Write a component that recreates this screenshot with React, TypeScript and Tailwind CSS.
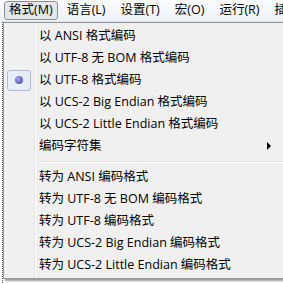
import { ReactNode } from 'react'

const font = { fontFamily: '"Open Sans", "Noto Sans CJK SC", sans-serif' }

const topMenus = ['语言(L)', '设置(T)', '宏(O)', '运行(R)', '插件(P)']

const group1 = [
  '以 ANSI 格式编码',
  '以 UTF-8 无 BOM 格式编码',
  '以 UTF-8 格式编码',
  '以 UCS-2 Big Endian 格式编码',
  '以 UCS-2 Little Endian 格式编码',
]

const group2 = [
  '转为 ANSI 编码格式',
  '转为 UTF-8 无 BOM 编码格式',
  '转为 UTF-8 编码格式',
  '转为 UCS-2 Big Endian 编码格式',
  '转为 UCS-2 Little Endian 编码格式',
]

function Item({ children, checked, submenu }: { children: ReactNode; checked?: boolean; submenu?: boolean }) {
  return (
    <div className="h-[22px] flex items-center relative">
      <div className="w-[30px] h-full flex items-center justify-center shrink-0">
        {checked && (
          <div className="w-[24px] h-[21px] rounded-[3px] border border-[#aebbd3] bg-[#e8eef8] flex items-center justify-center">
            <div className="w-[8px] h-[8px] rounded-full bg-[radial-gradient(circle_at_35%_35%,#a4a8ee,#3a3c9a)]" />
          </div>
        )}
      </div>
      <div className="pl-[5px] text-[12.5px] text-black whitespace-nowrap">{children}</div>
      {submenu && (
        <div className="absolute left-[263px] top-[7px] w-0 h-0 border-y-[4px] border-y-transparent border-l-[4px] border-l-black" />
      )}
    </div>
  )
}

export default function App() {
  return (
    <div className="w-[283px] h-[283px] bg-white relative overflow-hidden" style={font}>
      <div className="h-[22px] flex items-center bg-gradient-to-b from-[#fbfcfe] to-[#eef2f8] border-b border-[#dfe4ec] text-[12.5px] text-black whitespace-nowrap">
        <div className="shrink-0 ml-[4px] h-[19px] px-[4px] flex items-center rounded-[3px] border border-[#8e8f8f] bg-[#e4e6ea]">格式(M)</div>
        <div className="shrink-0 flex items-center gap-[15px] ml-[9px]">
          {topMenus.map(m => (
            <div key={m} className="shrink-0">{m}</div>
          ))}
        </div>
      </div>
      <div className="absolute left-[2px] top-[22px] bottom-0 border-l border-dotted border-[#555]" />
      <div className="absolute left-[3px] top-[22px] w-[300px] bg-[#f0f0f0] border border-[#979797] shadow-[2px_2px_2px_rgba(0,0,0,0.4)] pt-[2px] pb-[2px]">
        <div className="absolute left-[30px] top-0 bottom-0 w-[1px] bg-[#e2e3e3]" />
        <div className="absolute left-[31px] top-0 bottom-0 w-[1px] bg-white" />
        {group1.map((t, i) => (
          <Item key={t} checked={i === 2}>{t}</Item>
        ))}
        <Item submenu>编码字符集</Item>
        <div className="h-[9px] flex flex-col justify-center pl-[33px]">
          <div className="h-[1px] bg-[#e0e0e0]" />
          <div className="h-[1px] bg-white" />
        </div>
        {group2.map(t => (
          <Item key={t}>{t}</Item>
        ))}
      </div>
    </div>
  )
}
